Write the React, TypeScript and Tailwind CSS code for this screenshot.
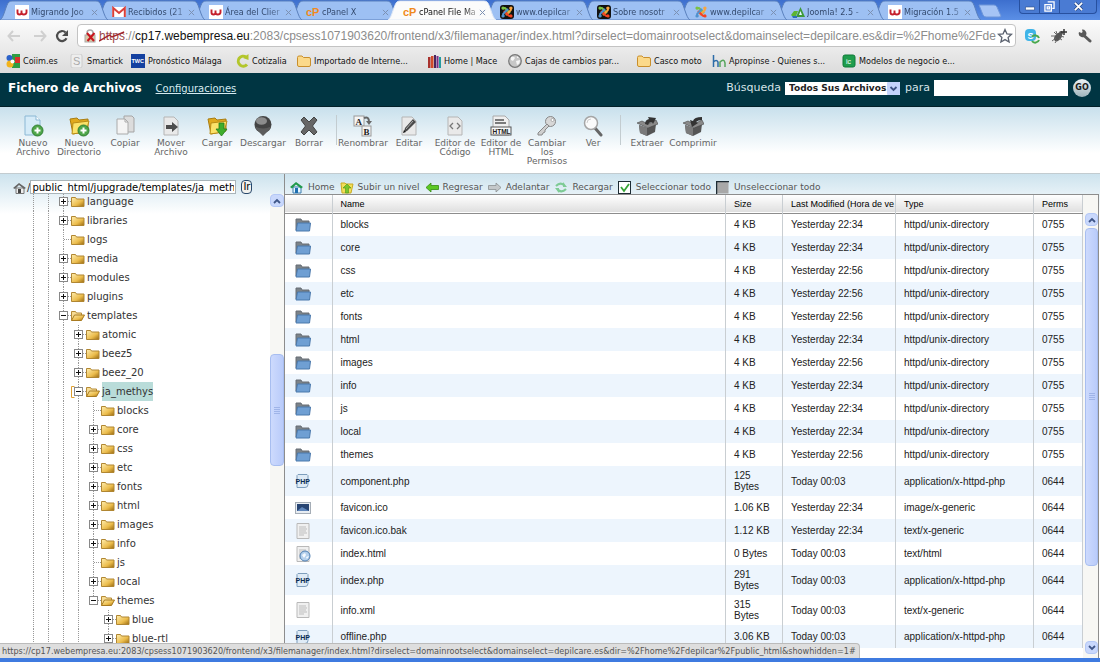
import React from 'react';

const CHROME_FONT = "font-['DejaVu_Sans_Condensed','DejaVu_Sans',sans-serif]";
const PAGE_FONT = "font-['DejaVu_Sans',sans-serif]";
const TABLE_FONT = "font-['Liberation_Sans',sans-serif]";

/* ---------- favicons ---------- */

type FavName = 'w' | 'gmail' | 'cp' | 'joomlaDark' | 'joomla' | 'green';

function Fav({ name }: { name: FavName }) {
  return (
    <svg viewBox="0 0 14 14" className="size-[14px] shrink-0" aria-hidden="true">
      {name === 'w' && (
        <>
          <rect width="14" height="14" fill="#fff" />
          <path d="M2.500 4.500v3q0 2 2 2t2-2v-2M6.500 7.500q0 2 2.300 2t2.700-2v-3" fill="none" stroke="#c5202c" strokeWidth="1.900" />
        </>
      )}
      {name === 'gmail' && (
        <>
          <rect x="0" y="2" width="14" height="10" rx="1" fill="#fff" />
          <path d="M1.2 12V3l5.8 5 5.8-5v9" fill="none" stroke="#d9403a" strokeWidth="2" />
        </>
      )}
      {name === 'cp' && (
        <text x="0" y="11" fontSize="11" fontWeight="700" fontFamily="Liberation Sans" fill="#f08a1d">cP</text>
      )}
      {(name === 'joomla' || name === 'joomlaDark') && (
        <>
          {name === 'joomlaDark' && <rect width="14" height="14" rx="3" fill="#111" />}
          <g fill="none" strokeWidth="2" strokeLinecap="round">
            <path d="M3 3.500q2-1 3 .500l3.500 3.500" stroke="#7ac143" />
            <path d="M10.500 3q1 2-.5 3L6.500 9.500" stroke="#f9a541" />
            <path d="M11 10.500q-2 1-3-.5L4.500 6.500" stroke="#f44321" />
            <path d="M3.500 11q-1-2 .5-3l3.500-3.500" stroke="#5091cd" />
          </g>
          <g>
            <circle cx="3" cy="3" r="1.600" fill="#7ac143" />
            <circle cx="11" cy="3" r="1.600" fill="#f9a541" />
            <circle cx="11" cy="11" r="1.600" fill="#f44321" />
            <circle cx="3" cy="11" r="1.600" fill="#5091cd" />
          </g>
        </>
      )}
      {name === 'green' && (
        <>
          <path d="M0 10l3-4h4l-2 5H1z" fill="#5cb531" />
          <path d="M5 12L9.5 2 14 12z" fill="#3f9a3a" />
          <path d="M8 10l1.5-4L11 10z" fill="#e5f6ff" />
          <path d="M1 11h5v2H2z" fill="#2c6fbb" />
        </>
      )}
    </svg>
  );
}

const TABS: { icon: FavName; title: string; active?: boolean }[] = [
  { icon: 'w', title: 'Migrando Joo' },
  { icon: 'gmail', title: 'Recibidos (21' },
  { icon: 'w', title: 'Área del Clier' },
  { icon: 'cp', title: 'cPanel X' },
  { icon: 'cp', title: 'cPanel File Ma', active: true },
  { icon: 'joomlaDark', title: 'www.depilcar' },
  { icon: 'joomlaDark', title: 'Sobre nosotr' },
  { icon: 'joomla', title: 'www.depilcar' },
  { icon: 'green', title: 'Joomla! 2.5 -' },
  { icon: 'w', title: 'Migración 1.5' },
];

function TabStrip() {
  return (
    <div className={`flex h-5 items-stretch bg-linear-to-b from-[#3d6fce] to-[#5b8fe6] pl-1 ${CHROME_FONT}`}>
      {TABS.map((t, i) => (
        <div key={i} className="relative flex w-[97px] shrink-0 items-center pl-[11px] pt-1" style={{ zIndex: t.active ? 30 : 20 - i }}>
          <svg className="absolute -left-1 top-0 h-5 w-[108px]" viewBox="0 0 108 20" preserveAspectRatio="none" aria-hidden="true">
            <path
              d="M0 20C4 18 6 4 9 2Q10 1 12 1H96Q98 1 99 2C102 4 104 18 108 20Z"
              fill={t.active ? '#fbfbfb' : '#9dc0f3'}
              stroke={t.active ? '#dfe8f6' : '#5a80bd'}
              strokeWidth="1"
            />
          </svg>
          <button className="relative flex shrink-0 items-center gap-0.5 text-[9px] leading-3">
            <Fav name={t.icon} />
            <span className={t.active
              ? 'min-w-[58px] whitespace-nowrap bg-linear-to-r from-[#111] from-75% to-[#bbb] bg-clip-text text-left text-transparent'
              : 'min-w-[58px] whitespace-nowrap bg-linear-to-r from-[#2e4468] from-75% to-[#7f9cc9] bg-clip-text text-left text-transparent'}>
              {t.title}
            </span>
          </button>
          <button className="relative ml-0.5 shrink-0" aria-label="Cerrar pestaña">
            <svg viewBox="0 0 8 8" className="size-[7px]"><path d="M1 1l6 6M7 1L1 7" stroke="#7b8fb0" strokeWidth="1.1" /></svg>
          </button>
        </div>
      ))}
      <button aria-label="Nueva pestaña" className="ml-1 mt-1 self-start">
        <svg viewBox="0 0 24 14" className="h-[14px] w-6"><path d="M1 1h15q2 0 3 2l4 9q0 1-2 1H8q-2 0-3-2z" fill="#a6c4f5" stroke="#6e96d9" /></svg>
      </button>
      <div className="ml-auto mr-[3px] flex h-[14px] overflow-hidden rounded-b border border-t-0 border-[#27509f] bg-[#4a7bd3]">
        <button aria-label="Minimizar" className="flex w-5 items-center justify-center border-r border-[#27509f]">
          <svg viewBox="0 0 10 10" className="size-[10px]"><path d="M0.500 5h9v3h-9z" fill="#fff" stroke="#2a4a85" strokeWidth=".6" /></svg>
        </button>
        <button aria-label="Restaurar" className="flex w-5 items-center justify-center border-r border-[#27509f]">
          <svg viewBox="0 0 12 12" className="size-[11px]"><path d="M4 1h7v7H9M1 4h7v7H1zM3.500 6.500h2.500v2H3.500z" fill="none" stroke="#fff" strokeWidth="1.4" /></svg>
        </button>
        <button aria-label="Cerrar" className="flex w-9 items-center justify-center">
          <svg viewBox="0 0 10 10" className="size-[9px]"><path d="M1 1l8 8M9 1L1 9" stroke="#2a4a85" strokeWidth="3.400" /><path d="M1 1l8 8M9 1L1 9" stroke="#fff" strokeWidth="2" /></svg>
        </button>
      </div>
    </div>
  );
}

function AddressBar() {
  return (
    <div className={`flex h-[31px] items-center bg-linear-to-b from-[#fbfbfb] to-[#e9e9e9] pl-[7px] pr-2 ${CHROME_FONT}`}>
      <button aria-label="Atrás" className="mr-3"><svg viewBox="0 0 14 12" className="h-3 w-[14px]"><path d="M6 1L1.500 6 6 11M2 6h11" fill="none" stroke="#d0d0d0" strokeWidth="2" /></svg></button>
      <button aria-label="Adelante" className="mr-2"><svg viewBox="0 0 14 12" className="h-3 w-[14px]"><path d="M8 1l4.500 5L8 11M12 6H1" fill="none" stroke="#d0d0d0" strokeWidth="2" /></svg></button>
      <button aria-label="Volver a cargar" className="mr-2"><svg viewBox="0 0 14 14" className="size-[14px]"><path d="M11.500 9.300A5 5 0 1 1 10.600 3.500" fill="none" stroke="#4c4c4c" strokeWidth="2.200" /><path d="M13 1v6H7z" fill="#4c4c4c" /></svg></button>
      <div className="flex h-[23px] min-w-0 flex-1 items-center rounded border border-[#c3c3c3] bg-white pl-[5px] pr-0.5">
        <svg viewBox="0 0 14 14" className="mr-0.5 size-[14px] shrink-0" aria-hidden="true">
          <path d="M4 6V4a3 3 0 0 1 6 0v2" fill="none" stroke="#aaa" strokeWidth="1.500" />
          <rect x="2" y="6" width="10" height="7" fill="#d9c9a8" stroke="#aaa" />
          <path d="M4 4l7 8M11.500 4l-7 8" stroke="#c8171e" strokeWidth="2" />
        </svg>
        <a href="#url" className="min-w-0 flex-1 whitespace-nowrap font-['Liberation_Sans',sans-serif] text-[12px] leading-5 text-[#8c8c8c]">
          <span className="relative text-[#9b4a4a]">
            https
            <svg viewBox="0 0 30 14" preserveAspectRatio="none" className="absolute inset-0 h-full w-full" aria-hidden="true"><path d="M0 12L12 6l3 2L29 3" fill="none" stroke="#a3262b" strokeWidth="1.500" /></svg>
          </span>
          ://<span className="text-[#111]">cp17.webempresa.eu</span>:2083/cpsess1071903620/frontend/x3/filemanager/index.html?dirselect=domainrootselect&amp;domainselect=depilcare.es&amp;dir=%2Fhome%2Fde
        </a>
        <button aria-label="Favorito" className="ml-0.5 shrink-0">
          <svg viewBox="0 0 16 16" className="size-4"><path d="M8 1.500l1.900 4.300 4.600.5-3.400 3.100 1 4.600L8 11.600 3.900 14l1-4.600L1.500 6.300l4.600-.5z" fill="#fff" stroke="#5c6370" strokeWidth="1.300" /></svg>
        </button>
      </div>
      <button aria-label="Skype" className="ml-2">
        <svg viewBox="0 0 16 16" className="size-4"><rect x="1" y="1" width="11" height="12" rx="4" fill="#3fb4e8" /><text x="3.500" y="10.500" fontSize="9" fontWeight="700" fontFamily="Liberation Sans" fill="#fff">S</text><path d="M8 9a4 4 0 0 1 7 1M15 12a4 4 0 0 1-7 1" fill="none" stroke="#48a84c" strokeWidth="2" /></svg>
      </button>
      <button aria-label="Depurar" className="ml-[10px]">
        <svg viewBox="0 0 18 16" className="h-4 w-[18px]"><ellipse cx="8" cy="9" rx="3.200" ry="5" transform="rotate(40 8 9)" fill="#555" /><path d="M1 8l4 0M2 13l4-3M5 15l2-3M6 3l1 3M12 12l-3-2M14 9l-4-1M4 4l3 3" stroke="#666" strokeWidth="1" /><circle cx="11" cy="5" r="2" fill="#555" /><path d="M14 1v6M11 4h6" stroke="#333" strokeWidth="1.500" /></svg>
      </button>
      <button aria-label="Herramientas" className="ml-[10px]">
        <svg viewBox="0 0 14 14" className="size-[14px]"><path d="M6 6.500L12 12" stroke="#5a5a5a" strokeWidth="3" strokeLinecap="round" /><path d="M1 3l2.500 1L4.600 3 4 .6a4 4 0 0 1 4.300 5A3.800 3.800 0 0 1 1 3z" fill="#5a5a5a" /></svg>
      </button>
    </div>
  );
}

/* ---------- bookmarks ---------- */

function FolderMark() {
  return <path d="M.5 3.500q0-1.500 1.500-1.500h3l1.500 1.500H12q1.500 0 1.500 1.500v6q0 1.500-1.500 1.500H2Q.5 12.500.5 11z" fill="#fbd98a" stroke="#c98f2c" />;
}

const BOOKMARKS: { label: string; width: string; icon: React.ReactNode }[] = [
  {
    label: 'Coiim.es', width: 'w-16',
    icon: <><rect x="6" y="0" width="8" height="14" fill="#2f9e44" /><path d="M9 3h5v6H9z" fill="#d9322b" /><circle cx="3.500" cy="4" r="3" fill="#2b62c9" /><circle cx="4" cy="10" r="3.500" fill="#f2b31c" /><circle cx="6.500" cy="7.500" r="2" fill="#fff" /></>,
  },
  {
    label: 'Smartick', width: 'w-[61px]',
    icon: <><rect x="1" y="0" width="11" height="14" rx="2" fill="#eee" stroke="#ccc" /><text x="3" y="11" fontSize="11" fontFamily="Liberation Sans" fill="#aaa">S</text></>,
  },
  {
    label: 'Pronóstico Málaga', width: 'w-[104px]',
    icon: <><rect width="14" height="14" fill="#1440a0" /><text x="0.500" y="9" fontSize="5.500" fontWeight="700" fontFamily="Liberation Sans" fill="#fff">TWC</text></>,
  },
  {
    label: 'Cotizalia', width: 'w-[62px]',
    icon: <><path d="M12 10.500A5 5 0 1 1 11 3" fill="none" stroke="#b3c62c" strokeWidth="3" /><path d="M13.500 0v6L8 4z" fill="#b3c62c" /></>,
  },
  { label: 'Importado de Interne...', width: 'w-[130px]', icon: <FolderMark /> },
  {
    label: 'Home | Mace', width: 'w-[81px]',
    icon: <><path d="M1 3h2.500v11H1z" fill="#a8322e" /><path d="M4 2h2.500v12H4z" fill="#d14b2a" /><path d="M7 1h2v13H7z" fill="#46265e" /><path d="M9.500 2h2v12h-2z" fill="#7b2f86" /><path d="M12 3h2v11h-2z" fill="#239ba0" /></>,
  },
  {
    label: 'Cajas de cambios par...', width: 'w-[129px]',
    icon: <><circle cx="7" cy="7" r="6.300" fill="#c7c7c7" stroke="#777" strokeWidth="1.200" /><path d="M3 3q3-1 4 1L5 7 3 6zM8 7l4-1q0 4-3 5zM9 2l2 2H9z" fill="#f6f6f6" /></>,
  },
  { label: 'Casco moto', width: 'w-[75px]', icon: <FolderMark /> },
  {
    label: 'Apropinse - Quienes s...', width: 'w-[130px]',
    icon: <><path d="M1.500 1v12M1.500 8q3-3 4.500 0v5" fill="none" stroke="#2d6ca8" strokeWidth="1.500" /><path d="M8 13V8q4-4 5 1v4" fill="none" stroke="#58a55c" strokeWidth="1.500" /></>,
  },
  {
    label: 'Modelos de negocio e...', width: 'w-[130px]',
    icon: <><rect x="1" y="1" width="12" height="12" rx="2" fill="#1f9d4d" stroke="#0f7a38" /><text x="4" y="9.500" fontSize="7" fontFamily="Liberation Sans" fill="#fff">ic</text></>,
  },
];

function Bookmarks() {
  return (
    <nav className={`flex h-[22px] items-center bg-linear-to-b from-[#e9e9e9] to-[#dcdcdc] pb-[3px] pl-1.5 ${CHROME_FONT}`}>
      {BOOKMARKS.map((b) => (
        <a key={b.label} href="#bookmark" className={`flex shrink-0 items-center gap-[3px] whitespace-nowrap text-[9px] leading-3 text-[#111] ${b.width}`}>
          <svg viewBox="0 0 14 14" className="size-[14px] shrink-0" aria-hidden="true">{b.icon}</svg>
          {b.label}
        </a>
      ))}
    </nav>
  );
}

/* ---------- file manager header ---------- */

function ManagerHeader() {
  return (
    <header className={`flex h-[34px] items-start border-b border-[#012029] bg-[#003542] pl-2 pr-[9px] pt-[5px] text-white ${PAGE_FONT}`}>
      <h1 className="text-[12px] font-bold leading-5">Fichero de Archivos</h1>
      <a href="#config" className="ml-[14px] text-[10px] leading-[22px] text-[#d5eaf0] underline">Configuraciones</a>
      <div className="ml-auto flex items-center">
        <label htmlFor="scope" className="text-[11px] leading-5 text-[#d5e3e8]">Búsqueda</label>
        <div className="relative ml-1 flex">
          <select id="scope" className="h-[13px] w-[115px] appearance-none bg-white pl-1 text-[9px] font-bold leading-3 text-[#222]">
            <option>Todos Sus Archivos</option>
          </select>
          <svg viewBox="0 0 13 13" className="pointer-events-none absolute right-0 top-0 size-[13px]" aria-hidden="true"><rect width="13" height="13" rx="1" fill="#c3d3fb" /><path d="M3.500 5l3 3 3-3" fill="none" stroke="#3c5283" strokeWidth="1.800" /></svg>
        </div>
        <label htmlFor="query" className="ml-[5px] text-[11px] leading-5 text-[#d5e3e8]">para</label>
        <input id="query" className="ml-1 h-4 w-[134px] bg-white px-1 text-[10px] text-black outline-none" />
        <button className="ml-[5px] flex size-[18px] items-center justify-center rounded-full bg-linear-to-b from-[#eef3f5] to-[#9fb4bb] text-[8px] font-bold text-[#1a1a1a]">GO</button>
      </div>
    </header>
  );
}

/* ---------- toolbar ---------- */

const page = <path d="M4 2h10l4 4v14H4z" fill="#e9e9e9" stroke="#b5b5b5" />;
const plusBadge = <><circle cx="15.500" cy="15.500" r="5.500" fill="#4fa64a" stroke="#2f7d30" /><path d="M15.500 12.500v6M12.500 15.500h6" stroke="#fff" strokeWidth="2" /></>;
const yellowFolder = <><path d="M2 4l7-1 2 2 9-1v12l-15 3z" fill="#e0a91d" stroke="#a97d12" /><path d="M5 8l16-2-3 11-14 2z" fill="#fbe26a" stroke="#b98c16" /></>;
const box = <><path d="M3 10l8 3 9-4-1 8-8 4-7-3z" fill="#555" /><path d="M3 10l8 3v8l-7-3z" fill="#7a7a7a" /><path d="M1 8l5-2 6 3 8-4 2 4-10 4z" fill="#8a8a8a" stroke="#444" strokeWidth=".6" /></>;

type Tool = { lines: string[]; icon: React.ReactNode };
const TOOL_GROUPS: Tool[][] = [
  [
    { lines: ['Nuevo', 'Archivo'], icon: <><path d="M3 1h11l4 4v15H3z" fill="#d5ebf8" stroke="#8bb8d4" /><path d="M14 1v4h4" fill="#fff" stroke="#8bb8d4" />{plusBadge}</> },
    { lines: ['Nuevo', 'Directorio'], icon: <>{yellowFolder}{plusBadge}</> },
    { lines: ['Copiar'], icon: <><path d="M10 1h8l2 2v14H10z" fill="#dcdcdc" stroke="#a5a5a5" /><path d="M3 4h8l3 3v12H3z" fill="#f4f4f4" stroke="#aaa" /><path d="M11 4v3h3" fill="none" stroke="#aaa" /></> },
    { lines: ['Mover', 'Archivo'], icon: <>{page}<path d="M6 10h6V7l6 5-6 5v-3H6z" fill="#4d4d4d" /></> },
    { lines: ['Cargar'], icon: <>{yellowFolder}<path d="M13 8h5v6h3l-5.500 7L10 14h3z" fill="#3fae2c" stroke="#277c1b" strokeWidth=".8" /></> },
    { lines: ['Descargar'], icon: <><circle cx="11" cy="9.500" r="8.500" fill="#444" /><ellipse cx="9.500" cy="6" rx="5.500" ry="3.800" fill="#8d8d8d" /><path d="M3 11.500q8 4 16 0-1 4-4.500 6L11 21l-3.500-3.500Q4 15.500 3 11.500z" fill="#5c5c5c" /></> },
    { lines: ['Borrar'], icon: <path d="M3 5l3-3 5 5 5-5 3 3-4.500 6L19 17l-3 3-5-5-5 5-3-3 4.500-6z" fill="#666" stroke="#444" /> },
  ],
  [
    { lines: ['Renombrar'], icon: <><rect x="2" y="1" width="10" height="10" fill="#f4f4f4" stroke="#999" /><text x="3.500" y="9.500" fontSize="9" fontWeight="700" fontFamily="Liberation Serif" fill="#222">A</text><rect x="10" y="11" width="9" height="10" fill="#f4f4f4" stroke="#999" /><text x="11.500" y="19.500" fontSize="9" fontWeight="700" fontFamily="Liberation Serif" fill="#222">B</text><path d="M12 3q5-2 5 4" fill="none" stroke="#666" strokeWidth="2" /><path d="M14 6h6l-3 4z" fill="#666" /></> },
    { lines: ['Editar'], icon: <>{page}<path d="M6 17l1-4 8-9 3 3-9 9z" fill="#4a4a4a" /><path d="M5 18l1-3 2 2z" fill="#111" /><path d="M8 14l7-8" stroke="#aaa" strokeWidth="1" /></> },
    { lines: ['Editor de', 'Código'], icon: <>{page}<path d="M9 8l-3 3 3 3M13 8l3 3-3 3" fill="none" stroke="#777" strokeWidth="1.300" /></> },
    { lines: ['Editor de', 'HTML'], icon: <><path d="M3 1h12l4 4v15H3z" fill="#efefef" stroke="#aaa" /><path d="M5 5h9M5 8h11" stroke="#555" strokeWidth="1.500" /><rect x="1" y="12" width="20" height="8" fill="#f8f8f8" stroke="#555" /><text x="2.500" y="18.500" fontSize="6.500" fontWeight="700" fontFamily="Liberation Sans" fill="#222">HTML</text></> },
    { lines: ['Cambiar', 'los', 'Permisos'], icon: <><circle cx="14.500" cy="6.500" r="5" fill="#d7d7d7" stroke="#888" /><circle cx="16.500" cy="5" r="1.500" fill="#fff" stroke="#888" strokeWidth=".6" /><path d="M11 9l-9 9v2h4l1-2 2-1v-2l4-4z" fill="#cfcfcf" stroke="#888" /></> },
    { lines: ['Ver'], icon: <><path d="M13 13l6 7" stroke="#666" strokeWidth="3" strokeLinecap="round" /><circle cx="9" cy="8" r="6.500" fill="#fafafa" stroke="#a5a5a5" strokeWidth="1.500" /><path d="M5 8q0-4 4-4" fill="none" stroke="#ccc" /></> },
  ],
  [
    { lines: ['Extraer'], icon: <>{box}<path d="M9 9q0-4 4-5l-1-2 8 1-3 6-1-2q-3 0-4 3z" fill="#333" /></> },
    { lines: ['Comprimir'], icon: <>{box}<path d="M20 2q-8 0-9 4L8 5l2 7 6-4-2-1q2-2 6-2z" fill="#333" /></> },
  ],
];

function Toolbar() {
  return (
    <div className={`flex h-[66px] items-start bg-linear-to-b from-[#c8e0ec] to-white to-70% pl-[10px] pt-2 ${PAGE_FONT}`}>
      {TOOL_GROUPS.map((group, g) => (
        <React.Fragment key={g}>
          {g > 0 && <div className="flex h-[30px] w-2 justify-center"><span className="w-px bg-[#c3ccd0]" /></div>}
          {group.map((t) => (
            <button key={t.lines.join(' ')} className="flex w-[46px] shrink-0 flex-col items-center text-[9px] leading-[9px] text-[#666]">
              <svg viewBox="0 0 22 22" className="mb-0.5 size-[22px] shrink-0" aria-hidden="true">{t.icon}</svg>
              {t.lines.map((l) => <span key={l} className="whitespace-nowrap">{l}</span>)}
            </button>
          ))}
        </React.Fragment>
      ))}
    </div>
  );
}

/* ---------- directory tree ---------- */

type Node = { name: string; depth: number; state?: 'plus' | 'minus' | 'leaf'; selected?: boolean };
const TREE: Node[] = [
  { name: 'language', depth: 2 },
  { name: 'libraries', depth: 2 },
  { name: 'logs', depth: 2, state: 'leaf' },
  { name: 'media', depth: 2 },
  { name: 'modules', depth: 2 },
  { name: 'plugins', depth: 2 },
  { name: 'templates', depth: 2, state: 'minus' },
  { name: 'atomic', depth: 3 },
  { name: 'beez5', depth: 3 },
  { name: 'beez_20', depth: 3 },
  { name: 'ja_methys', depth: 3, state: 'minus', selected: true },
  { name: 'blocks', depth: 4, state: 'leaf' },
  { name: 'core', depth: 4 },
  { name: 'css', depth: 4 },
  { name: 'etc', depth: 4 },
  { name: 'fonts', depth: 4 },
  { name: 'html', depth: 4 },
  { name: 'images', depth: 4 },
  { name: 'info', depth: 4 },
  { name: 'js', depth: 4, state: 'leaf' },
  { name: 'local', depth: 4 },
  { name: 'themes', depth: 4, state: 'minus' },
  { name: 'blue', depth: 5 },
  { name: 'blue-rtl', depth: 5 },
];

function TreeRow({ node }: { node: Node }) {
  const state = node.state ?? 'plus';
  const guides = Array.from({ length: node.depth }, (_, i) => i !== 4);
  const lastChild = node.name === 'themes';
  return (
    <li className="flex h-[19px] items-center pl-[26px]">
      {guides.map((on, i) => (
        <span key={i} className="flex h-full w-[15px] shrink-0 justify-center">
          {on && <span className="border-l border-dotted border-[#999]" />}
        </span>
      ))}
      <svg viewBox="0 0 15 19" className="h-[19px] w-[15px] shrink-0" aria-hidden="true">
        <path d={lastChild ? 'M7.5 0v9' : 'M7.5 0v19'} stroke="#999" strokeDasharray="1 1" />
        <path d="M8 9.500h7" stroke="#999" strokeDasharray="1 1" />
        {node.selected && <path d="M3.500 4.500H.5v11h3" fill="none" stroke="#e0a030" />}
        {state !== 'leaf' && (
          <>
            <rect x="3.500" y="5.500" width="8" height="8" fill="#fff" stroke="#888" />
            <path d={state === 'plus' ? 'M5 9.500h5M7.500 7v5' : 'M5 9.500h5'} stroke="#111" />
          </>
        )}
      </svg>
      <svg viewBox="0 0 14 12" className="h-3 w-[14px] shrink-0" aria-hidden="true">
        <defs>
          <linearGradient id="gold" x1="0" y1="0" x2="1" y2="1">
            <stop offset="0" stopColor="#ffeeb0" /><stop offset=".6" stopColor="#ebbc4c" /><stop offset="1" stopColor="#9a6a10" />
          </linearGradient>
        </defs>
        {state === 'minus' ? (
          <><path d="M.5 10.500v-9h4l1 1.500h5v2" fill="#f6dc96" stroke="#b58a35" /><path d="M.5 10.500L3.500 5h10l-3 5.500z" fill="url(#gold)" stroke="#a87a20" /></>
        ) : (
          <path d="M.5 10.500v-9h4l1 1.500h7.500v7.500z" fill="url(#gold)" stroke="#b08632" />
        )}
      </svg>
      <a href="#dir" className={node.selected ? 'ml-0.5 bg-[#b9dcd9] leading-[19px]' : 'ml-0.5 leading-[19px]'}>{node.name}</a>
    </li>
  );
}

function ScrollButton({ dir }: { dir: 'up' | 'down' }) {
  return (
    <button aria-label={dir === 'up' ? 'Subir' : 'Bajar'} className="flex h-[13px] w-full shrink-0 items-center justify-center rounded-sm border border-[#b4c8f6] bg-[#c9d8fc]">
      <svg viewBox="0 0 8 6" className="h-1.5 w-2"><path d={dir === 'up' ? 'M1 5l3-3 3 3' : 'M1 1l3 3 3-3'} fill="none" stroke="#3f5688" strokeWidth="1.800" /></svg>
    </button>
  );
}

function ScrollThumb({ className }: { className: string }) {
  return (
    <div className={`flex w-full shrink-0 flex-col items-center justify-center gap-px rounded-sm border border-[#a8bef0] bg-linear-to-r from-[#cddafd] to-[#b9cbfa] ${className}`}>
      {[0, 1, 2, 3].map((i) => <span key={i} className="h-px w-1.5 bg-[#9fb4e8]" />)}
    </div>
  );
}

function TreePane() {
  return (
    <aside className={`flex w-[285px] shrink-0 flex-col border-r border-[#8d8d8d] ${PAGE_FONT}`}>
      <div className="flex h-5 shrink-0 items-end pl-[13px] text-[10px] leading-3 text-[#222]">
        <svg viewBox="0 0 14 12" className="h-3 w-[14px]" aria-hidden="true"><path d="M3 6h8v5.500H3z" fill="#eee" stroke="#777" /><path d="M0 6l6-5 7 5-2 1-5-4-4 4z" fill="#666" /><path d="M5 7h3v4H5z" fill="#444" /></svg>
        <label htmlFor="path">/</label>
        <input id="path" defaultValue="public_html/jupgrade/templates/ja_meth" className="h-[14px] w-[206px] border border-[#a9b4b9] bg-white px-px text-[10px] leading-3 text-black outline-none" />
        <button className="ml-[5px] h-[14px] rounded-sm border border-[#27476b] bg-[#f2f2ee] px-px text-[10px] leading-3 text-black">Ir</button>
      </div>
      <div className="flex min-h-0 flex-1 overflow-hidden">
        <ul className="-mt-0.5 min-w-0 flex-1 text-[10px] text-[#333]">
          {TREE.map((n, i) => <TreeRow key={i} node={n} />)}
        </ul>
        <div className="flex w-[14px] flex-col bg-[#f7f7f4]">
          <ScrollButton dir="up" />
          <div className="grow-[147]" />
          <ScrollThumb className="h-[112px]" />
          <div className="grow-[192]" />
        </div>
      </div>
    </aside>
  );
}

/* ---------- listing ---------- */

const ACTIONS: { label: string; icon: React.ReactNode }[] = [
  { label: 'Home', icon: <><path d="M3 6h8v6H3z" fill="#e9f6ff" stroke="#3a7cae" /><path d="M0 6l6-5 7 5-2 1.500L6 3.500 2 7.500z" fill="#219a4c" /><path d="M5 7h3v5H5z" fill="#1f6fb0" /></> },
  { label: 'Subir un nivel', icon: <><path d="M1 2h4l1 1h7l-2 9H2z" fill="#f3df5a" stroke="#c9ab22" /><path d="M7 3l4 4H8.500v5h-3V7H3z" fill="#7ac52a" stroke="#4f941a" strokeWidth=".6" /></> },
  { label: 'Regresar', icon: <path d="M1 6.500L6 2v2.500h7.500v4H6V11z" fill="#5cc823" stroke="#368a12" strokeWidth=".8" /> },
  { label: 'Adelantar', icon: <path d="M13 6.500L8 2v2.500H.5v4H8V11z" fill="#c4c8ca" stroke="#8b9092" strokeWidth=".8" /> },
  { label: 'Recargar', icon: <><path d="M2 5q4-4 8-1M12 8q-4 4-8 1" fill="none" stroke="#7ecb95" strokeWidth="2.200" /><path d="M9 1v5h4zM5 12V7H1z" fill="#7ecb95" /></> },
  { label: 'Seleccionar todo', icon: <><rect x=".5" y=".5" width="12" height="12" fill="#fff" stroke="#1d2b33" /><path d="M3 6l3 4 5-7" fill="none" stroke="#35a435" strokeWidth="1.800" /></> },
  { label: 'Unseleccionar todo', icon: <><rect x=".5" y=".5" width="12" height="12" fill="#a8a8a8" /><path d="M.5 13V.5H13" fill="none" stroke="#1d2b33" strokeWidth="1.500" /></> },
];

type Row = { kind: 'dir' | 'php' | 'image' | 'text' | 'html'; name: string; size: string; date: string; type: string; perms: string };
const dir = (name: string, time: string): Row => ({ kind: 'dir', name, size: '4 KB', date: `Yesterday ${time}`, type: 'httpd/unix-directory', perms: '0755' });
const ROWS: Row[] = [
  dir('blocks', '22:34'),
  dir('core', '22:34'),
  dir('css', '22:56'),
  dir('etc', '22:56'),
  dir('fonts', '22:56'),
  dir('html', '22:34'),
  dir('images', '22:56'),
  dir('info', '22:34'),
  dir('js', '22:34'),
  dir('local', '22:34'),
  dir('themes', '22:56'),
  { kind: 'php', name: 'component.php', size: '125 Bytes', date: 'Today 00:03', type: 'application/x-httpd-php', perms: '0644' },
  { kind: 'image', name: 'favicon.ico', size: '1.06 KB', date: 'Yesterday 22:34', type: 'image/x-generic', perms: '0644' },
  { kind: 'text', name: 'favicon.ico.bak', size: '1.12 KB', date: 'Yesterday 22:34', type: 'text/x-generic', perms: '0644' },
  { kind: 'html', name: 'index.html', size: '0 Bytes', date: 'Today 00:03', type: 'text/html', perms: '0644' },
  { kind: 'php', name: 'index.php', size: '291 Bytes', date: 'Today 00:03', type: 'application/x-httpd-php', perms: '0644' },
  { kind: 'text', name: 'info.xml', size: '315 Bytes', date: 'Today 00:03', type: 'text/x-generic', perms: '0644' },
  { kind: 'php', name: 'offline.php', size: '3.06 KB', date: 'Today 00:03', type: 'application/x-httpd-php', perms: '0644' },
];

function FileIcon({ kind }: { kind: Row['kind'] }) {
  return (
    <svg viewBox="0 0 16 16" className="size-4" aria-hidden="true">
      {kind === 'dir' && <><path d="M1 13V2h5l1 2h7v4" fill="#7b8288" stroke="#666d74" /><path d="M1 14L2.500 6H15.500L14.500 14z" fill="#6f9fd3" stroke="#4a78ab" /></>}
      {kind === 'php' && <><path d="M3 1.500h9l1 1v9q0 3-3 3H2v-12z" fill="#dfebf6" stroke="#7d9dbb" /><text x="0.500" y="10.500" fontSize="7" fontWeight="700" fontFamily="Liberation Sans" fill="#0d2c52">PHP</text></>}
      {kind === 'image' && <><rect x=".5" y="2.500" width="15" height="11" fill="#e8edf2" stroke="#a5adb6" /><rect x="2" y="4" width="12" height="7" fill="#274472" /><path d="M2 11l5-4 7 4z" fill="#5f86bb" /></>}
      {(kind === 'text' || kind === 'html') && <><path d="M2 .500h12v15H2z" fill="#f0f0f0" stroke="#b9b9b9" /><path d="M4 4h7M4 6h8M4 8h7M4 10h8M4 12h5" stroke="#bdbdbd" /></>}
      {kind === 'html' && <><circle cx="10" cy="10" r="5" fill="#b4d0ec" stroke="#4f7fb3" /><path d="M7 9l3-2 1 2-2 3zM11 11l3-1-2 3z" fill="#f5faff" /></>}
    </svg>
  );
}

const CELL = 'truncate border-l border-[#c9ced2] pl-2';

function Listing() {
  return (
    <main className="flex min-w-0 flex-1 flex-col">
      <div className={`flex h-5 shrink-0 items-end gap-[5px] pl-[5px] text-[9px] leading-[13px] text-[#555] ${PAGE_FONT}`}>
        {ACTIONS.map((a) => (
          <button key={a.label} className="flex items-center gap-1 whitespace-nowrap">
            <svg viewBox="0 0 14 13" className="h-[13px] w-[14px]" aria-hidden="true">{a.icon}</svg>
            {a.label}
          </button>
        ))}
      </div>
      <div className={`mr-px flex min-h-0 flex-1 border-r border-t border-[#8d8d8d] bg-white text-[10px] text-[#222] ${TABLE_FONT}`}>
        <div className="min-w-0 flex-1 overflow-hidden">
          <table className="w-full table-fixed border-collapse border-r border-[#c9ced2] text-left">
            <colgroup>
              <col className="w-[47px]" /><col /><col className="w-[57px]" /><col className="w-[113px]" /><col className="w-[138px]" /><col className="w-[49px]" />
            </colgroup>
            <thead>
              <tr className="h-[18px] border-b border-[#8d8d8d] bg-linear-to-b from-white to-[#dfdfdf] text-[9px] text-black">
                <th aria-label="Icono" />
                {['Name', 'Size', 'Last Modified (Hora de ve', 'Type', 'Perms'].map((h) => (
                  <th key={h} className="whitespace-nowrap border-l border-[#c9ced2] pl-2 font-normal leading-4">{h}</th>
                ))}
              </tr>
            </thead>
            <tbody>
              {ROWS.map((r) => {
                const tall = /^\d{3} /.test(r.size);
                return (
                  <tr key={r.name} className={tall ? 'h-[30px] even:bg-[#edf5fd]' : 'h-[23px] even:bg-[#edf5fd]'}>
                    <td className="pl-[10px]"><FileIcon kind={r.kind} /></td>
                    <td className={CELL}>{r.name}</td>
                    <td className={tall ? 'border-l border-[#c9ced2] pl-2 pr-4 leading-[11px]' : CELL}>{r.size}</td>
                    <td className={CELL}>{r.date}</td>
                    <td className={CELL}>{r.type}</td>
                    <td className={CELL}>{r.perms}</td>
                  </tr>
                );
              })}
            </tbody>
          </table>
        </div>
        <div className="flex w-[15px] shrink-0 flex-col bg-[#f7f7f4] pb-1 pl-0.5 pt-[18px]">
          <ScrollButton dir="up" />
          <ScrollThumb className="mt-0.5 min-h-0 grow-[336]" />
          <div className="grow-[77]" />
          <ScrollButton dir="down" />
        </div>
      </div>
    </main>
  );
}

export default function App() {
  return (
    <div className="relative flex h-screen flex-col overflow-hidden bg-white">
      <TabStrip />
      <AddressBar />
      <Bookmarks />
      <ManagerHeader />
      <Toolbar />
      <div className="flex min-h-0 flex-1 border-t border-[#c3ccd0] bg-[linear-gradient(#cde3ee,#fff_40px)]">
        <TreePane />
        <Listing />
      </div>
      <div className="h-1 shrink-0 bg-[#3f7be0]" />
      <div className={`absolute bottom-1 left-0 z-40 h-[15px] whitespace-nowrap rounded-tr border-r border-t border-[#bbb] bg-[#dedede] pl-0.5 pr-[3px] text-[9px] leading-[14px] text-[#555] ${CHROME_FONT}`}>
        https://cp17.webempresa.eu:2083/cpsess1071903620/frontend/x3/filemanager/index.html?dirselect=domainrootselect&amp;domainselect=depilcare.es&amp;dir=%2Fhome%2Fdepilcar%2Fpublic_html&amp;showhidden=1#
      </div>
    </div>
  );
}
